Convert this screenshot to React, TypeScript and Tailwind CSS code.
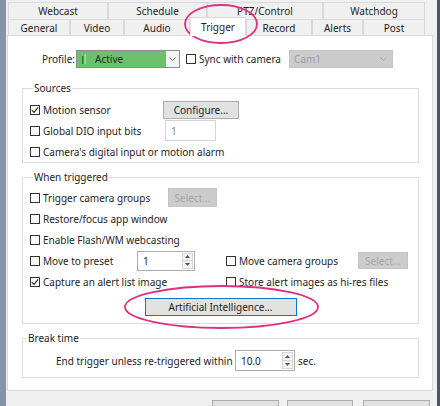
import React from "react";

function Check({ checked = false }: { checked?: boolean }) {
  return (
    <span className="w-[10px] h-[10px] border border-[#333333] bg-white flex items-center justify-center shrink-0">
      {checked && (
        <svg width="8" height="8" viewBox="0 0 8 8">
          <path d="M0.8 4.2 L3 6.4 L7.2 1.4" stroke="#222" strokeWidth="1.1" fill="none" />
        </svg>
      )}
    </span>
  );
}

function CbLabel({ checked, children, className = "" }: { checked?: boolean; children: React.ReactNode; className?: string }) {
  return (
    <div className={"flex items-center gap-[3px] shrink-0 whitespace-nowrap " + className}>
      <Check checked={checked} />
      <span>{children}</span>
    </div>
  );
}

function Arrow({ up }: { up?: boolean }) {
  return (
    <svg width="5" height="3" viewBox="0 0 5 3">
      <path d={up ? "M0 3 L2.5 0 L5 3Z" : "M0 0 L2.5 3 L5 0Z"} fill="#555" />
    </svg>
  );
}

function Spin({ value, className = "" }: { value: string; className?: string }) {
  return (
    <div className={"flex border border-[#adadad] bg-white shrink-0 " + className}>
      <div className="flex-1 flex items-center pl-[5px]">{value}</div>
      <div className="w-[11px] flex flex-col my-[1px] mr-[1px]">
        <div className="flex-1 flex items-center justify-center bg-[#f4f4f4] border border-[#d6d6d6]">
          <Arrow up />
        </div>
        <div className="flex-1 flex items-center justify-center bg-[#f4f4f4] border border-[#d6d6d6] border-t-0">
          <Arrow />
        </div>
      </div>
    </div>
  );
}

function Tab({ label, className = "", selected = false }: { label: string; className?: string; selected?: boolean }) {
  return (
    <div
      className={
        "flex items-center justify-center border-t border-l border-r border-[#d9d9d9] shrink-0 " +
        (selected ? "bg-white relative z-10 -mb-[1px] h-[19px]" : "bg-[#f0f0f0] h-full") +
        " " +
        className
      }
    >
      {label}
    </div>
  );
}

export default function App() {
  return (
    <div className="relative w-[440px] h-[406px] overflow-hidden flex bg-[#f0f0f0] text-[#1e1e1e] text-[10px] leading-[14px] font-['Noto_Sans',sans-serif]">
      {/* left window edge */}
      <div className="w-[6px] h-full bg-[#8893a6] shrink-0" />

      {/* main dialog */}
      <div className="w-[431px] shrink-0 flex flex-col pt-[2px]">
        {/* tab rows */}
        <div className="ml-[2px] flex flex-col shrink-0">
          <div className="flex h-[17px] shrink-0">
            <Tab label="Webcast" className="w-[100px]" />
            <Tab label="Schedule" className="w-[99px]" />
            <Tab label="PTZ/Control" className="w-[116px]" />
            <Tab label="Watchdog" className="w-[102px]" />
          </div>
          <div className="flex h-[16px] items-end shrink-0">
            <Tab label="General" className="w-[62px]" />
            <Tab label="Video" className="w-[54px]" />
            <Tab label="Audio" className="w-[66px]" />
            <Tab label="Trigger" className="w-[56px]" selected />
            <Tab label="Record" className="w-[66px]" />
            <Tab label="Alerts" className="w-[51px]" />
            <Tab label="Post" className="w-[62px]" />
          </div>
        </div>

        {/* tab pane */}
        <div className="ml-[1px] w-[426px] h-[356px] shrink-0 bg-white border border-[#d9d9d9] flex flex-col pt-[14px]">
          {/* profile row */}
          <div className="flex items-center h-[18px] pl-[34px] shrink-0">
            <span className="w-[31px] whitespace-nowrap">Profile:</span>
            <div className="ml-[3px] w-[104px] h-[18px] border border-[#8c8c8c] flex">
              <div className="flex-1 bg-[#6cc06b] flex items-center pl-[4px]">
                <svg width="6" height="10" viewBox="0 0 6 10">
                  <rect x="1" y="2" width="1.5" height="8" fill="#2e7d32" />
                  <rect x="3.5" y="0" width="1.5" height="10" fill="#9be39a" />
                </svg>
                <span className="ml-[8px] text-[#17331a]">Active</span>
              </div>
              <div className="w-[13px] bg-[#f3f3f3] flex items-center justify-center">
                <svg width="7" height="4" viewBox="0 0 7 4">
                  <path d="M0.5 0.5 L3.5 3.5 L6.5 0.5" stroke="#666" fill="none" />
                </svg>
              </div>
            </div>
            <CbLabel className="ml-[6px] w-[103px]">Sync with camera</CbLabel>
            <div className="w-[104px] h-[18px] bg-[#cccccc] border border-[#c4c4c4] flex items-center pl-[4px] text-[#9d9d9d]">
              <span className="flex-1">Cam1</span>
              <svg width="7" height="4" viewBox="0 0 7 4" className="mr-[5px]">
                <path d="M0.5 0.5 L3.5 3.5 L6.5 0.5" stroke="#a8a8a8" fill="none" />
              </svg>
            </div>
          </div>

          {/* Sources */}
          <fieldset className="mt-[13px] ml-[14px] w-[397px] shrink-0 border border-[#dcdcdc] pl-[7px] pt-[4px] pb-0">
            <legend className="ml-[3px] px-[1px]">Sources</legend>
            <div className="flex items-center h-[21px]">
              <CbLabel checked className="w-[133px]">Motion sensor</CbLabel>
              <div className="w-[76px] h-[18px] bg-[#e1e1e1] border border-[#adadad] flex items-center justify-center">
                Configure...
              </div>
            </div>
            <div className="flex items-center h-[21px]">
              <CbLabel className="w-[135px]">Global DIO input bits</CbLabel>
              <div className="w-[51px] h-[21px] border border-[#d4d4d4] bg-white flex items-center pl-[5px] text-[#8a8a8a]">1</div>
            </div>
            <div className="flex items-center h-[21px]">
              <CbLabel>Camera's digital input or motion alarm</CbLabel>
            </div>
          </fieldset>

          {/* When triggered */}
          <fieldset className="mt-[7px] ml-[14px] w-[397px] shrink-0 border border-[#dcdcdc] pl-[7px] pt-[3px] pb-[7px]">
            <legend className="ml-[3px] px-[1px]">When triggered</legend>
            <div className="flex items-center h-[21px]">
              <CbLabel className="w-[138px]">Trigger camera groups</CbLabel>
              <div className="w-[49px] h-[19px] bg-[#cccccc] border border-[#c4c4c4] flex items-center justify-center text-[#a6a6a6]">
                Select...
              </div>
            </div>
            <div className="flex items-center h-[21px]">
              <CbLabel>Restore/focus app window</CbLabel>
            </div>
            <div className="flex items-center h-[21px]">
              <CbLabel>Enable Flash/WM webcasting</CbLabel>
            </div>
            <div className="flex items-center h-[21px]">
              <CbLabel className="w-[107px]">Move to preset</CbLabel>
              <Spin value="1" className="w-[58px] h-[20px]" />
              <CbLabel className="ml-[31px] w-[132px]">Move camera groups</CbLabel>
              <div className="w-[50px] h-[17px] bg-[#cccccc] border border-[#c4c4c4] flex items-center justify-center text-[#a6a6a6]">
                Select...
              </div>
            </div>
            <div className="flex items-center h-[21px]">
              <CbLabel checked className="w-[196px]">Capture an alert list image</CbLabel>
              <CbLabel>Store alert images as hi-res files</CbLabel>
            </div>
            <div className="flex justify-center mt-[6px] pr-[7px]">
              <div className="w-[152px] h-[18px] bg-[#e1e1e1] border border-[#0078d7] flex items-center justify-center">
                Artificial Intelligence...
              </div>
            </div>
          </fieldset>

          {/* Break time */}
          <fieldset className="mt-[7px] ml-[14px] w-[397px] shrink-0 border border-[#dcdcdc] pt-[5px] pb-[6px]">
            <legend className="ml-[4px] px-[1px]">Break time</legend>
            <div className="flex items-center h-[21px] pl-[33px]">
              <span className="w-[179px] whitespace-nowrap">End trigger unless re-triggered within</span>
              <Spin value="10.0" className="w-[60px] h-[21px]" />
              <span className="ml-[3px]">sec.</span>
            </div>
          </fieldset>
        </div>

        {/* bottom buttons */}
        <div className="flex mt-[9px] ml-[206px] shrink-0">
          <div className="w-[67px] h-[22px] bg-[#e1e1e1] border border-[#adadad]" />
          <div className="ml-[8px] w-[66px] h-[22px] bg-[#e1e1e1] border border-[#adadad]" />
          <div className="ml-[10px] w-[67px] h-[22px] bg-[#e1e1e1] border border-[#adadad]" />
        </div>
      </div>

      {/* right window edge */}
      <div className="w-[3px] h-full bg-[#4d5566] shrink-0" />

      {/* annotation ellipses */}
      <svg className="absolute left-0 top-0 pointer-events-none" width="440" height="406" viewBox="0 0 440 406">
        <ellipse cx="221" cy="24" rx="36" ry="19" fill="none" stroke="#df2f80" strokeWidth="1.8" />
        <ellipse cx="221.5" cy="307" rx="96.5" ry="21" fill="none" stroke="#df2f80" strokeWidth="1.8" />
      </svg>
    </div>
  );
}
